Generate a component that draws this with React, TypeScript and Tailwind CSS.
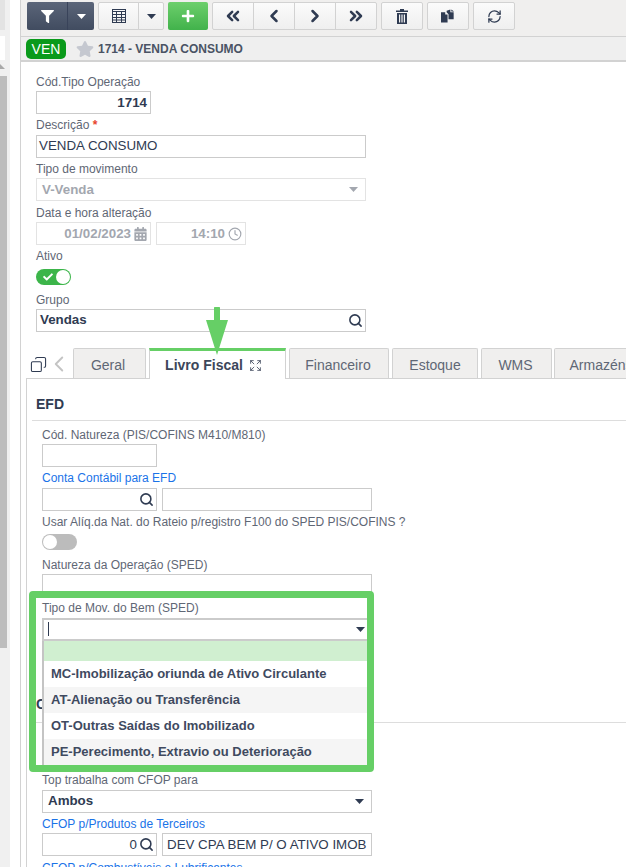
import type { ReactNode } from 'react';
import { Search, Clock, Copy, ChevronLeft, ChevronRight, ChevronsLeft, ChevronsRight, Expand, RefreshCw } from 'lucide-react';
import { FaFilter, FaPlus, FaStar, FaCalendarAlt, FaCheck } from 'react-icons/fa';

const ToolButton = ({ children, className = '' }: { children: ReactNode; className?: string }) => (
  <div className={`h-[28px] flex items-center justify-center bg-gradient-to-b from-[#fbfbfb] to-[#efefef] border border-[#d2d2d2] text-[#2f3b52] ${className}`}>
    {children}
  </div>
);

const Caret = ({ className = '' }: { className?: string }) => (
  <svg viewBox="0 0 9 5" className={`w-[9px] h-[5px] shrink-0 ${className}`} fill="currentColor">
    <path d="M0 0h9L4.5 5z" />
  </svg>
);

const Label = ({ children, link }: { children: ReactNode; link?: boolean }) => (
  <div className={`h-[20.67px] pt-[4.4px] text-[12px] leading-[14px] whitespace-nowrap ${link ? 'text-[#1a73e8]' : 'text-[#5f6775]'}`}>
    {children}
  </div>
);

const Box = ({ children, className = '' }: { children?: ReactNode; className?: string }) => (
  <div className={`h-[23px] flex items-center border border-[#cbcbcb] px-[2px] text-[#2f3b52] text-[13.33px] font-bold ${className}`}>
    {children}
  </div>
);

const Toggle = ({ on }: { on?: boolean }) =>
  on ? (
    <div className="mt-[3px] mb-[3.5px] w-[35px] h-[16px] rounded-full bg-[#3cb54a] flex items-center justify-between pl-[7px] pr-[1px]">
      <FaCheck className="w-[10px] h-[10px] text-white" />
      <div className="w-[14px] h-[14px] rounded-full bg-white" />
    </div>
  ) : (
    <div className="mt-[3px] mb-[3px] w-[35px] h-[16px] rounded-full bg-[#bcbcbc] flex items-center pl-[1px]">
      <div className="w-[14px] h-[14px] rounded-full bg-white" />
    </div>
  );

const SearchIcon = ({ className = '' }: { className?: string }) => (
  <Search className={`w-[15px] h-[15px] text-[#2f3b52] shrink-0 ${className}`} strokeWidth={2.5} />
);

const Tab = ({ title, width }: { title: string; width: string }) => (
  <div className={`h-[30px] ${width} shrink-0 flex items-center justify-center pt-[3px] bg-[#f0efee] border border-b-0 border-[#d2d2d2] rounded-t-[2px] text-[14px] text-[#5f6775]`}>
    {title}
  </div>
);

const options = [
  '',
  'MC-Imobilização oriunda de Ativo Circulante',
  'AT-Alienação ou Transferência',
  'OT-Outras Saídas do Imobilizado',
  'PE-Perecimento, Extravio ou Deterioração',
];

export default function App() {
  return (
    <div className="relative w-[626px] h-[867px] overflow-hidden flex bg-white font-['Liberation_Sans',sans-serif]">
      {/* Left rail with the scrollbar of the outer frame */}
      <aside className="w-[20px] shrink-0 flex">
        <div className="w-[10px] flex flex-col bg-[#f0f0f0]">
          <div className="h-[30px] w-[5px] bg-[#e3e3e3]" />
          <div className="h-[6px]" />
          <div className="h-[24px] w-[5px] bg-white" />
          <div className="h-[4px]" />
          <svg viewBox="0 0 5 5" className="w-[5px] h-[5px] text-[#a8a8a8]" fill="currentColor">
            <path d="M0 5V0l5 5z" />
          </svg>
          <div className="h-[7px]" />
          <div className="h-[572px] w-[7px] bg-[#bdbdbd]" />
        </div>
      </aside>

      <main className="flex-1 min-w-0 flex flex-col border-l border-[#d2d2d2]">
        {/* Toolbar */}
        <div className="h-[37px] shrink-0 flex items-start gap-[4px] pt-[2px] pl-[6px] bg-[#f0efee] border-b border-[#d2d2d2]">
          <div className="h-[28px] w-[67px] flex rounded-[2px] bg-gradient-to-b from-[#5b6579] to-[#414c60] text-white">
            <div className="w-[41px] flex items-center justify-center border-r border-[#39435a]">
              <FaFilter className="w-[13px] h-[13px]" />
            </div>
            <div className="flex-1 flex items-center justify-center">
              <Caret className="w-[8px] h-[4px]" />
            </div>
          </div>
          <div className="flex">
            <ToolButton className="w-[41px] rounded-l-[2px]">
              <svg viewBox="0 0 14 14" className="w-[14px] h-[14px]" fill="none" stroke="currentColor">
                <rect x="0.5" y="0.5" width="13" height="13" />
                <path d="M0.5 2.5h13M0.5 5.5h13M0.5 8.5h13M0.5 11h13M4.5 2.5v11M9.5 2.5v11" />
              </svg>
            </ToolButton>
            <ToolButton className="w-[26px] -ml-px rounded-r-[2px]">
              <Caret className="w-[8px] h-[4px]" />
            </ToolButton>
          </div>
          <div className="w-[40px] h-[28px] flex items-center justify-center rounded-[2px] bg-gradient-to-b from-[#6ccf6c] to-[#41b24b] text-white">
            <FaPlus className="w-[14px] h-[14px]" />
          </div>
          <div className="flex">
            <ToolButton className="w-[42px] rounded-l-[2px]"><ChevronsLeft className="w-[20px] h-[20px]" strokeWidth={3} /></ToolButton>
            <ToolButton className="w-[42px] -ml-px"><ChevronLeft className="w-[20px] h-[20px]" strokeWidth={3} /></ToolButton>
            <ToolButton className="w-[42px] -ml-px"><ChevronRight className="w-[20px] h-[20px]" strokeWidth={3} /></ToolButton>
            <ToolButton className="w-[42px] -ml-px rounded-r-[2px]"><ChevronsRight className="w-[20px] h-[20px]" strokeWidth={3} /></ToolButton>
          </div>
          <ToolButton className="w-[42px] rounded-[2px]">
            <svg viewBox="0 0 12 15" className="w-[12px] h-[15px]" fill="currentColor">
              <path d="M4 0h4v1.5h4V3H0V1.5h4z" />
              <path fillRule="evenodd" d="M1 4h10v11H1zM3 5.5v8h1.2v-8zM5.4 5.5v8h1.2v-8zM7.8 5.5v8H9v-8z" />
            </svg>
          </ToolButton>
          <ToolButton className="w-[42px] rounded-[2px]">
            <svg viewBox="0 0 16 14" className="w-[15px] h-[14px]" fill="currentColor">
              <path d="M0 3h4.5v2.5H7V14H0z" />
              <path d="M6 1.5 10 0v3h3.5v7.5H8V5L6 3z" />
              <path d="M11 0l3 2.2h-3z" />
            </svg>
          </ToolButton>
          <ToolButton className="w-[42px] rounded-[2px]"><RefreshCw className="w-[15px] h-[15px]" strokeWidth={2} /></ToolButton>
        </div>

        {/* Record header */}
        <div className="h-[25px] shrink-0 flex items-center bg-[#efefef] border-b-2 border-[#d2d2d2] pl-[5px]">
          <div className="w-[40px] h-[20px] rounded-[5px] bg-[#0a9a1b] text-white text-[14px] leading-[20px] text-center">VEN</div>
          <FaStar className="ml-[10px] w-[18px] h-[18px] text-[#c5c8d0]" />
          <span className="ml-[4px] text-[12px] font-bold text-[#4a5364] whitespace-nowrap">1714 - VENDA CONSUMO</span>
        </div>

        <div className="flex-1 min-h-0 flex flex-col">
          {/* Main form */}
          <div className="h-[286px] shrink-0 pt-[8.4px] pl-[15px]">
            <Label>Cód.Tipo Operação</Label>
            <Box className="w-[115px] justify-end pr-[3px]">1714</Box>
            <Label>
              Descrição <span className="text-[#e8452c] font-bold">*</span>
            </Label>
            <Box className="w-[330px] font-normal">VENDA CONSUMO</Box>
            <Label>Tipo de movimento</Label>
            <Box className="w-[330px] justify-between border-[#e3e3e3] text-[#a3a7af] pl-[5px] pr-[7px]">
              <span>V-Venda</span>
              <Caret />
            </Box>
            <Label>Data e hora alteração</Label>
            <div className="flex gap-[5px]">
              <Box className="w-[115px] justify-end gap-[3px] pr-[3px] border-[#e3e3e3] text-[#a3a7af]">
                <span>01/02/2023</span>
                <FaCalendarAlt className="w-[13px] h-[14px]" />
              </Box>
              <Box className="w-[90px] justify-end gap-[3px] pr-[3px] border-[#e3e3e3] text-[#a3a7af]">
                <span>14:10</span>
                <Clock className="w-[14px] h-[14px]" />
              </Box>
            </div>
            <Label>Ativo</Label>
            <Toggle on />
            <Label>Grupo</Label>
            <Box className="w-[330px] justify-between pl-[3px]">
              <span>Vendas</span>
              <SearchIcon />
            </Box>
          </div>

          {/* Tabs */}
          <div className="pl-[5px] flex items-end">
            <div className="w-[47px] h-[30px] shrink-0 flex items-center pl-[4px] pt-[2px] text-[#2f3b52]">
              <Copy className="w-[17px] h-[17px] shrink-0 -scale-x-100" strokeWidth={1.5} />
              <ChevronLeft className="w-[26px] h-[26px] shrink-0 -ml-[1px] text-[#c4c4c4]" strokeWidth={1.75} />
            </div>
            <Tab title="Geral" width="w-[73px] pr-[3px]" />
            <div className="ml-[3px] w-[137px] h-[31px] -mb-px shrink-0 relative z-10 flex items-center justify-center gap-[6px] pt-[1px] pr-[8px] bg-white border-x border-[#d2d2d2] border-t-[3px] border-t-[#66cf66] text-[14px] font-bold text-[#3c465a]">
              Livro Fiscal
              <Expand className="w-[13px] h-[13px]" strokeWidth={1.5} />
            </div>
            <Tab title="Financeiro" width="ml-[3px] w-[100px] pr-[2px]" />
            <Tab title="Estoque" width="ml-[3px] w-[86px]" />
            <Tab title="WMS" width="ml-[3px] w-[71px] pr-[2px]" />
            <Tab title="Armazéns" width="ml-[2px] w-[94px]" />
          </div>

          {/* Tab panel */}
          <div className="ml-[5px] flex-1 min-h-0 border-l border-t border-[#d2d2d2]">
            <div className="ml-[5px] h-[42px] pl-[4px] pt-[17px] border-b border-[#dddddd] text-[14px] leading-[16px] font-bold text-[#2f3b52]">EFD</div>
            <div className="pl-[15px] pt-[2.4px]">
              <Label>Cód. Natureza (PIS/COFINS M410/M810)</Label>
              <Box className="w-[115px]" />
              <Label link>Conta Contábil para EFD</Label>
              <div className="flex gap-[5px]">
                <Box className="w-[115px] justify-end"><SearchIcon /></Box>
                <Box className="w-[210px]" />
              </div>
              <Label>Usar Alíq.da Nat. do Rateio p/registro F100 do SPED PIS/COFINS ?</Label>
              <Toggle />
              <Label>Natureza da Operação (SPED)</Label>
              <Box className="w-[330px]" />
              <Label>Tipo de Mov. do Bem (SPED)</Label>
              <div className="relative w-[330px]">
                <Box className="w-[330px] justify-between border-2 border-[#66cf66] pl-[4px] pr-[5px]">
                  <span className="w-px h-[14px] bg-[#2f3b52]" />
                  <Caret />
                </Box>
                {/* Open dropdown */}
                <ul className="absolute z-20 left-0 top-full w-full bg-white border-l-2 border-[#c4c4c4] text-[13px] font-bold text-[#3f4a5f]">
                  {options.map((option, i) => (
                    <li
                      key={i}
                      className={`pl-[7px] flex items-center ${i === 0 ? 'h-[20px] bg-[#d0efd0]' : 'h-[26px]'} ${i === 2 || i === 4 ? 'bg-[#f5f5f5]' : ''}`}
                    >
                      {option}
                    </li>
                  ))}
                </ul>
              </div>
            </div>
            <div className="ml-[5px] mt-[55px] h-[27px] pl-[4px] border-b border-[#dddddd] text-[14px] leading-[16px] font-bold text-[#2f3b52]">CFOP</div>
            <div className="pl-[15px] pt-[46.4px]">
              <Label>Top trabalha com CFOP para</Label>
              <Box className="w-[330px] justify-between pl-[5px] pr-[7px]">
                <span>Ambos</span>
                <Caret />
              </Box>
              <Label link>CFOP p/Produtos de Terceiros</Label>
              <div className="flex gap-[5px]">
                <Box className="w-[115px] justify-end gap-[2px] font-normal">
                  <span>0</span>
                  <SearchIcon />
                </Box>
                <Box className="w-[210px] pl-[4px] font-normal whitespace-nowrap overflow-hidden">DEV CPA BEM P/ O ATIVO IMOB</Box>
              </div>
              <Label link>CFOP p/Combustíveis e Lubrificantes</Label>
            </div>
          </div>
        </div>
      </main>

      {/* Highlight drawn over the screenshot */}
      <div className="absolute z-30 left-[29px] top-[591px] w-[345px] h-[181px] border-[7px] border-[#66cf66] rounded-[4px] pointer-events-none" />
      <svg className="absolute z-30 left-[206px] top-[307px] w-[22px] h-[48px] pointer-events-none" viewBox="0 0 22 48" fill="#66cf66">
        <path d="M8 1.5a3 3 0 0 1 6 0V13h8L11 48 0 13h8z" />
      </svg>
    </div>
  );
}
